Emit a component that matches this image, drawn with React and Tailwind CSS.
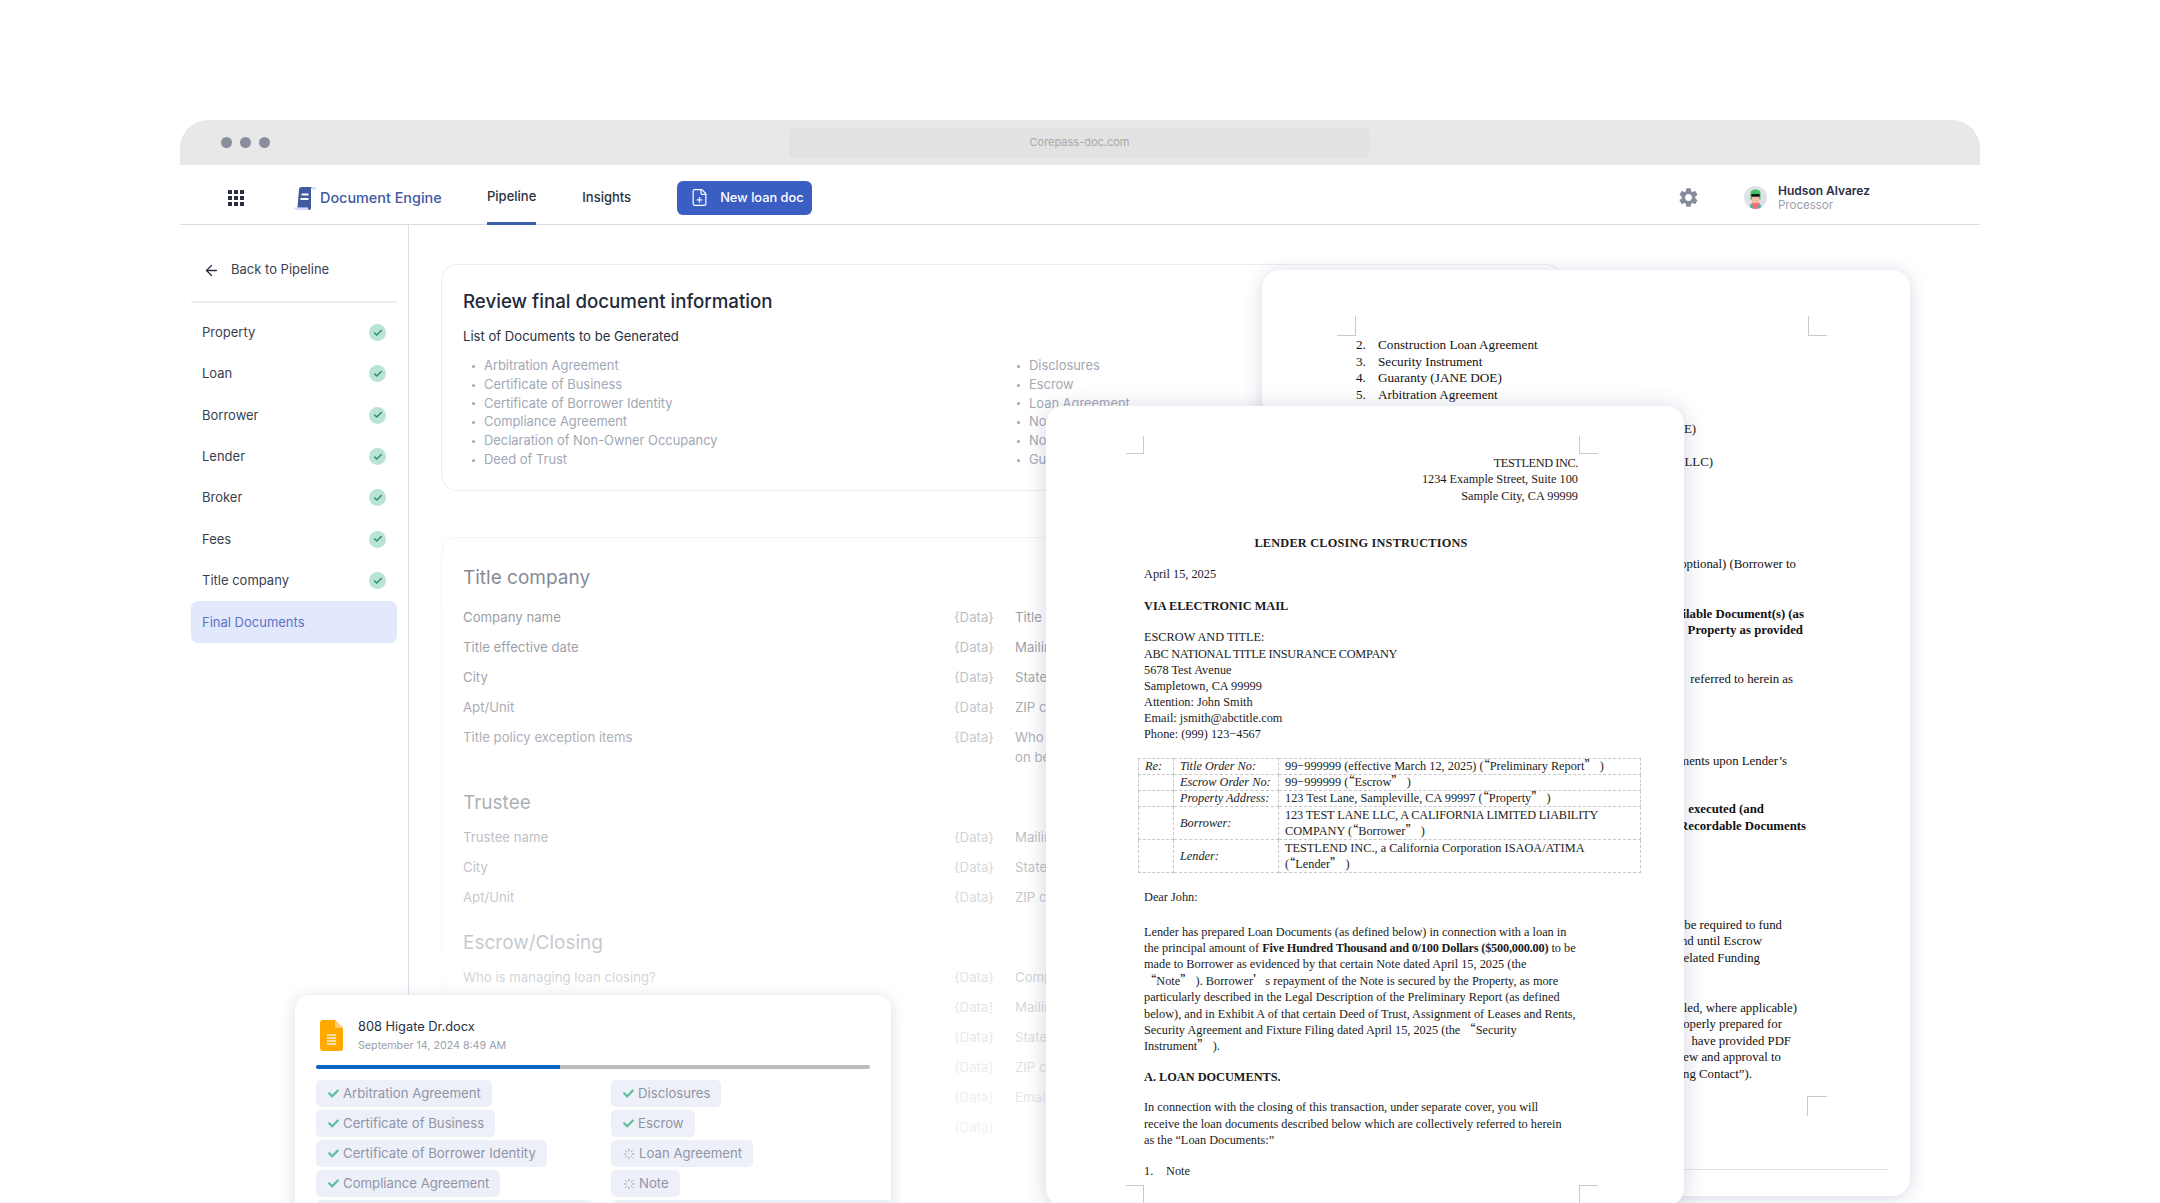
import { ArrowLeft, Check, FilePlus } from 'lucide-react';
import { FaCheck } from 'react-icons/fa';
import { MdSettings } from 'react-icons/md';

const STEPS = ['Property', 'Loan', 'Borrower', 'Lender', 'Broker', 'Fees', 'Title company'];
const DOCS_LEFT = ['Arbitration Agreement', 'Certificate of Business', 'Certificate of Borrower Identity', 'Compliance Agreement', 'Declaration of Non-Owner Occupancy', 'Deed of Trust'];
const DOCS_RIGHT = ['Disclosures', 'Escrow', 'Loan Agreement', 'Note', 'Notice of Right', 'Guaranty'];

const CHIPS = [
  ['Arbitration Agreement', true], ['Disclosures', true],
  ['Certificate of Business', true], ['Escrow', true],
  ['Certificate of Borrower Identity', true], ['Loan Agreement', false],
  ['Compliance Agreement', true], ['Note', false],
  ['Declaration of Non-Owner Occupancy', true], ['Guaranty and Notice of Right to Cancel', false],
];

function Logo() {
  return (
    <svg width="23" height="24" viewBox="0 0 23 24" className="shrink-0">
      <path d="M5 1h15c1.500 0 2.500 1 2.500 2.500H18V1z" fill="#d5def5" />
      <path d="M0 21.500h14V24H2.500C1 24 0 23 0 21.500z" fill="#d5def5" />
      <path d="M5 3.500C5 2 6 1 7.500 1H18c-.8.400-1 1.200-1 2.500V22c0 1.200-.6 2-1.600 2-.9 0-1.400-.8-1.400-2.500H3.500z" fill="#41599f" />
      <rect x="7.500" y="7.500" width="7" height="2" fill="#fff" />
      <rect x="6.500" y="12" width="8" height="2" fill="#fff" />
    </svg>
  );
}

function Avatar() {
  return (
    <svg width="23" height="23" viewBox="0 0 23 23" className="shrink-0">
      <circle cx="11.500" cy="11.500" r="11.500" fill="#dfe1e6" />
      <path d="M6 21c.5-4 2.500-5 5.500-5s5 1 5.500 5c-1.500 1.300-3.500 2-5.500 2S7.500 22.300 6 21z" fill="#e8757a" />
      <path d="M6 21c.3-1.500.8-2.600 1.800-3.400l1 5c-1-.3-2-.9-2.800-1.600zM17 21c-.3-1.500-.8-2.600-1.800-3.400l-1 5c1-.3 2-.9 2.800-1.600z" fill="#21c7b8" />
      <rect x="7.500" y="6" width="8" height="11" rx="3.500" fill="#edbfa4" />
      <path d="M6.500 14V7.500C6.500 5 8.500 3.500 11.500 3.500s5 1.500 5 4V14l-1.500-1V8H8v5z" fill="#3fc25f" />
      <rect x="7.200" y="8" width="8.600" height="2.800" rx="1" fill="#15171c" />
    </svg>
  );
}

function FileIcon() {
  return (
    <svg width="23" height="31" viewBox="0 0 23 31" className="shrink-0">
      <path d="M3 0h12l8 8v20a3 3 0 0 1-3 3H3a3 3 0 0 1-3-3V3a3 3 0 0 1 3-3z" fill="#ffa800" />
      <path d="M15 0l8 8h-6a2 2 0 0 1-2-2z" fill="#ffcf75" />
      <path d="M7 15h9M7 18h9M7 21h9M7 24h9" stroke="#fff4dd" strokeWidth="1.300" />
    </svg>
  );
}

function Spinner() {
  return (
    <svg width="12" height="12" viewBox="0 0 12 12" className="shrink-0" stroke="#9ea3b1" strokeWidth="1" strokeLinecap="round">
      <path d="M6 1v2M6 9v2M1 6h2M9 6h2M2.500 2.500l1.400 1.400M8.100 8.100l1.400 1.400M2.500 9.500l1.400-1.400M8.100 3.900l1.400-1.400" />
    </svg>
  );
}

function Q({ children }) {
  return <span className="font-['Noto_Sans_CJK_SC',serif] leading-[0]">{children}</span>;
}

function DataRow({ label, second }) {
  return (
    <div className="flex h-[30px] items-center text-[13.2px] text-[#3d4150]">
      <span className="w-[491px] whitespace-nowrap">{label}</span>
      <span className="w-[61px] text-[#787d8b]">{'{Data}'}</span>
      <span className="whitespace-nowrap">{second}</span>
    </div>
  );
}

function Heading({ children, className }) {
  return <h3 className={`h-[28px] text-[19px] leading-[28px] text-[#1f2a3c] ${className}`}>{children}</h3>;
}

function BackDocument() {
  return (
    <div className="absolute left-[1262px] top-[270px] h-[926px] w-[648px] rounded-[18px] bg-white font-['Liberation_Serif',serif] text-[12.8px] leading-[16.500px] text-[#111] shadow-[0_2px_18px_rgba(70,80,130,0.22)]">
      <div className="absolute left-[75px] top-[46px] h-[20px] w-[19px] border-b border-r border-[#c9cad0]" />
      <div className="absolute left-[546px] top-[46px] h-[20px] w-[19px] border-b border-l border-[#c9cad0]" />
      <div className="absolute left-[545px] top-[826px] h-[20px] w-[20px] border-l border-t border-[#c9cad0]" />
      <ol className="pl-[94px] pt-[67px] text-[13.2px]">
        {['Construction Loan Agreement', 'Security Instrument', 'Guaranty (JANE DOE)', 'Arbitration Agreement'].map((d, i) => (
          <li key={d} className="flex"><span className="w-[22px]">{i + 2}.</span>{d}</li>
        ))}
      </ol>
      <div className="whitespace-nowrap text-right">
        <p className="mt-[17.500px] pr-[214px]">Guaranty (JOHN DOE)</p>
        <p className="mt-[16.500px] pr-[197px]">Guaranty (123 TEST LANE LLC)</p>
        <p className="mt-[85.500px] pr-[114px]">optional) (Borrower to</p>
        <p className="mt-[33.500px] pr-[106px] font-bold">Available Document(s) (as</p>
        <p className="pr-[107px] font-bold">Property as provided</p>
        <p className="mt-[32.500px] pr-[117px]">referred to herein as</p>
        <p className="mt-[65.500px] pr-[123px]">documents upon Lender’s</p>
        <p className="mt-[31.500px] pr-[146px] font-bold">executed (and</p>
        <p className="pr-[104px] font-bold">Recordable Documents</p>
        <p className="mt-[82.500px] pr-[128px]">be required to fund</p>
        <p className="pr-[148px]">and until Escrow</p>
        <p className="pr-[150px]">related Funding</p>
        <p className="mt-[33.500px] pr-[113px]">initialed, where applicable)</p>
        <p className="pr-[128px]">properly prepared for</p>
        <p className="pr-[119px]">have provided PDF</p>
        <p className="pr-[129px]">review and approval to</p>
        <p className="pr-[158px]">Closing Contact”).</p>
      </div>
      <div className="ml-[94px] mr-[22px] mt-[87px] border-t border-[#e2e3e8]" />
    </div>
  );
}

function FrontDocument() {
  return (
    <div className="absolute left-[1046px] top-[406px] h-[800px] w-[638px] rounded-[18px] bg-white font-['Liberation_Serif',serif] text-[12.3px] leading-[16.400px] text-[#1b1b1b] shadow-[0_2px_22px_rgba(70,80,130,0.24)]">
      <div className="absolute left-[80px] top-[30px] h-[18px] w-[18px] border-b border-r border-[#c9cad0]" />
      <div className="absolute left-[533px] top-[30px] h-[18px] w-[19px] border-b border-l border-[#c9cad0]" />
      <div className="absolute left-[80px] top-[779px] h-[18px] w-[18px] border-r border-t border-[#c9cad0]" />
      <div className="absolute left-[533px] top-[779px] h-[18px] w-[19px] border-l border-t border-[#c9cad0]" />
      <div className="ml-[98px] w-[434px] whitespace-nowrap pt-[49px]">
        <p className="text-right"><span className="tracking-[-0.4px]">TESTLEND INC.</span><br />1234 Example Street, Suite 100<br />Sample City, CA 99999</p>
        <p className="mt-[31px] text-center font-bold tracking-[0.2px]">LENDER CLOSING INSTRUCTIONS</p>
        <p className="mt-[14px]">April 15, 2025</p>
        <p className="mt-[16px] font-bold">VIA ELECTRONIC MAIL</p>
        <p className="mt-[15px] leading-[16.100px]">
          ESCROW AND TITLE:<br /><span className="tracking-[-0.3px]">ABC NATIONAL TITLE INSURANCE COMPANY</span><br />5678 Test Avenue<br />Sampletown, CA 99999<br />
          Attention: John Smith<br />Email: jsmith@abctitle.com<br />Phone: (999) 123−4567
        </p>
        <table className="-ml-[6px] mt-[16px] w-[503px] table-fixed border-collapse leading-[15px] [&_td]:border [&_td]:border-dashed [&_td]:border-[#c8c8c8] [&_td]:py-0 [&_td]:align-middle">
          <colgroup>
            <col className="w-[35px]" />
            <col className="w-[105px]" />
            <col />
          </colgroup>
          <tbody>
            <tr className="h-[16px]">
              <td className="pl-[6px] italic">Re:</td>
              <td className="pl-[6px] italic">Title Order No:</td>
              <td className="pl-[6px]">99−999999 (effective March 12, 2025) (<Q>“</Q>Preliminary Report<Q>”</Q> )</td>
            </tr>
            <tr className="h-[16px]">
              <td />
              <td className="pl-[6px] italic">Escrow Order No:</td>
              <td className="pl-[6px]">99−999999 (<Q>“</Q>Escrow<Q>”</Q> )</td>
            </tr>
            <tr className="h-[16px]">
              <td />
              <td className="pl-[6px] italic">Property Address:</td>
              <td className="pl-[6px]">123 Test Lane, Sampleville, CA 99997 (<Q>“</Q>Property<Q>”</Q> )</td>
            </tr>
            <tr className="h-[33px] leading-[16px]">
              <td />
              <td className="pl-[6px] italic">Borrower:</td>
              <td className="pl-[6px]"><span className="tracking-[-0.15px]">123 TEST LANE LLC, A CALIFORNIA LIMITED LIABILITY</span><br />COMPANY (<Q>“</Q>Borrower<Q>”</Q> )</td>
            </tr>
            <tr className="h-[33px] leading-[16px]">
              <td />
              <td className="pl-[6px] italic">Lender:</td>
              <td className="pl-[6px]">TESTLEND INC., a California Corporation ISAOA/ATIMA<br />(<Q>“</Q>Lender<Q>”</Q> )</td>
            </tr>
          </tbody>
        </table>
        <p className="mt-[16px]">Dear John:</p>
        <p className="mt-[18px]">
          Lender has prepared Loan Documents (as defined below) in connection with a loan in<br />
          the principal amount of <b className="tracking-[-0.2px]">Five Hundred Thousand and 0/100 Dollars ($500,000.00)</b> to be<br />
          made to Borrower as evidenced by that certain Note dated April 15, 2025 (the<br />
          <Q>“</Q>Note<Q>”</Q> ). Borrower<Q>’</Q>s repayment of the Note is secured by the Property, as more<br />
          particularly described in the Legal Description of the Preliminary Report (as defined<br />
          below), and in Exhibit A of that certain Deed of Trust, Assignment of Leases and Rents,<br />
          Security Agreement and Fixture Filing dated April 15, 2025 (the <Q>“</Q>Security<br />
          Instrument<Q>”</Q> ).
        </p>
        <p className="mt-[14px] font-bold">A. LOAN DOCUMENTS.</p>
        <p className="mt-[14px]">
          In connection with the closing of this transaction, under separate cover, you will<br />
          receive the loan documents described below which are collectively referred to herein<br />
          as the “Loan Documents:”
        </p>
        <p className="mt-[15px] flex"><span className="w-[22px]">1.</span>Note</p>
      </div>
    </div>
  );
}

function UploadCard() {
  return (
    <div className="absolute left-[295px] top-[995px] h-[300px] w-[596px] rounded-[14px] bg-white pl-[21px] pt-[25px] shadow-[0_2px_16px_rgba(70,80,130,0.2)]">
      <div className="flex h-[31px] items-start pl-[4px]">
        <FileIcon />
        <div className="-mt-[3px] ml-[15px] whitespace-nowrap">
          <p className="text-[12.8px] leading-[19px] text-[#2a3040]">808 Higate Dr.docx</p>
          <p className="text-[10.7px] leading-[19px] text-[#9a9fad]">September 14, 2024 8:49 AM</p>
        </div>
      </div>
      <div className="mt-[14px] h-[4px] w-[554px] rounded-full bg-[#bdbdbd]">
        <div className="h-full w-[244px] rounded-l-full bg-[#0a66c2]" />
      </div>
      <div className="mt-[11px] grid grid-cols-[295px_1fr] gap-y-[3px]">
        {CHIPS.map(([name, done]) => (
          <div key={name} className="flex h-[27px] w-fit items-center gap-[4px] rounded-[5px] bg-[#eef0f9] pl-[12px] pr-[11px] text-[13.2px] text-[#8f95a5]">
            {done ? <FaCheck size={11} className="shrink-0 text-[#5bbf9f]" /> : <Spinner />}
            <span className="whitespace-nowrap">{name}</span>
          </div>
        ))}
      </div>
    </div>
  );
}

export default function App() {
  return (
    <div className="relative h-[1203px] w-[2160px] overflow-hidden bg-white pl-[180px] pr-[180px] pt-[120px] font-['Inter',sans-serif]">
      <div className="relative flex h-[45px] items-center rounded-t-[28px] bg-[#e8e8e8] pl-[41px]">
        <div className="flex gap-[8px]">
          <span className="h-[11px] w-[11px] rounded-full bg-[#8a8f9e]" />
          <span className="h-[11px] w-[11px] rounded-full bg-[#8a8f9e]" />
          <span className="h-[11px] w-[11px] rounded-full bg-[#8a8f9e]" />
        </div>
        <div className="ml-[519px] flex h-[30px] w-[581px] items-center justify-center rounded-[6px] bg-[#e2e2e2] text-[11px] text-[#a9a9a9]">
          Corepass-doc.com
        </div>
      </div>

      <header className="flex h-[60px] items-center border-b border-[#dcdce4] pl-[48px] pr-[112px] pt-[6px]">
        <svg width="16" height="16" viewBox="0 0 16 16" className="shrink-0" fill="#2b3040">
          <rect x="0" y="0" width="4" height="4" /><rect x="6" y="0" width="4" height="4" /><rect x="12" y="0" width="4" height="4" />
          <rect x="0" y="6" width="4" height="4" /><rect x="6" y="6" width="4" height="4" /><rect x="12" y="6" width="4" height="4" />
          <rect x="0" y="12" width="4" height="4" /><rect x="6" y="12" width="4" height="4" /><rect x="12" y="12" width="4" height="4" />
        </svg>
        <div className="ml-[50px]"><Logo /></div>
        <span className="ml-[3px] w-[121px] whitespace-nowrap text-[14.4px] font-medium text-[#41599f]">Document Engine</span>
        <a className="-mb-px ml-[46px] flex items-center self-stretch border-b-[3px] border-[#3f5fb5] text-[13px] font-medium text-[#2a3040]">Pipeline</a>
        <a className="ml-[46px] text-[13px] font-medium text-[#2a3040]">Insights</a>
        <button className="ml-[46px] flex h-[34px] w-[135px] items-center gap-[11px] rounded-[6px] bg-[#3a5ec2] pl-[13px] text-[12.8px] font-medium text-white">
          <FilePlus size={19} strokeWidth={1.5} className="shrink-0" />
          New loan doc
        </button>
        <div className="ml-auto flex items-center">
          <MdSettings size={23} className="text-[#878c9c]" />
          <div className="ml-[44px]"><Avatar /></div>
          <div className="ml-[11px] w-[90px] whitespace-nowrap">
            <p className="text-[12px] font-semibold leading-[14px] text-[#2a2f45]">Hudson Alvarez</p>
            <p className="text-[11.5px] leading-[14px] text-[#9a9fb0]">Processor</p>
          </div>
        </div>
      </header>

      <div className="flex h-[978px]">
        <aside className="w-[229px] shrink-0 border-r border-[#dcdfe8] px-[11px] pt-[31px] text-[13px] text-[#3a3f50]">
          <div className="flex h-[28px] items-center pl-[12px]">
            <ArrowLeft size={17} strokeWidth={1.8} className="text-[#2a3040]" />
            <span className="ml-[11px]">Back to Pipeline</span>
          </div>
          <div className="mb-[9px] mt-[17px] h-[2px] bg-[#eceef3]" />
          {STEPS.map((s) => (
            <div key={s} className="flex h-[41.330px] items-center justify-between pl-[11px] pr-[11px]">
              {s}
              <span className="flex h-[17px] w-[17px] items-center justify-center rounded-full bg-[#b9e3d7]">
                <Check size={10} strokeWidth={3.5} className="text-[#2e8b6d]" />
              </span>
            </div>
          ))}
          <div className="flex h-[42px] items-center rounded-[7px] bg-[#e3e9fd] pl-[11px] text-[#5a72c4]">Final Documents</div>
        </aside>

        <main className="relative flex-1 pl-[32px] pt-[39px]">
          <section className="h-[227px] w-[1121px] rounded-[16px] border border-[#ecedf4] pl-[21px] pt-[23px]">
            <h2 className="text-[18.700px] font-medium leading-[28px] text-[#1f2a3c]">Review final document information</h2>
            <p className="mt-[10px] text-[13.1px] leading-[20px] text-[#2a3040]">List of Documents to be Generated</p>
            <div className="mt-[11px] flex text-[12.9px] leading-[18.800px] text-[#a2a7b5]">
              <ul className="w-[545px]">
                {DOCS_LEFT.map((d) => <li key={d} className="flex items-center pl-[9px]"><span className="mr-[9px] h-[3px] w-[3px] rounded-full bg-[#a2a7b5]" />{d}</li>)}
              </ul>
              <ul>
                {DOCS_RIGHT.map((d) => <li key={d} className="flex items-center pl-[9px]"><span className="mr-[9px] h-[3px] w-[3px] rounded-full bg-[#a2a7b5]" />{d}</li>)}
              </ul>
            </div>
          </section>

          <section className="mt-[46px] h-[800px] w-[1121px] rounded-[16px] border border-[#ecedf4] pl-[21px] pt-[26px]">
            <Heading>Title company</Heading>
            <div className="mt-[11px]">
              <DataRow label="Company name" second="Title company phone" />
              <DataRow label="Title effective date" second="Mailing address" />
              <DataRow label="City" second="State" />
              <DataRow label="Apt/Unit" second="ZIP code" />
              <div className="flex h-[50px] pt-[4px] text-[13.2px] leading-[20px] text-[#3d4150]">
                <span className="w-[491px]">Title policy exception items</span>
                <span className="w-[61px] text-[#787d8b]">{'{Data}'}</span>
                <span>Who is managing<br />on behalf</span>
              </div>
            </div>
            <Heading className="mt-[16px]">Trustee</Heading>
            <div className="mt-[6px]">
              <DataRow label="Trustee name" second="Mailing address" />
              <DataRow label="City" second="State" />
              <DataRow label="Apt/Unit" second="ZIP code" />
            </div>
            <Heading className="mt-[16px]">Escrow/Closing</Heading>
            <div className="mt-[6px]">
              <DataRow label="Who is managing loan closing?" second="Company name" />
              <DataRow label="Escrow officer" second="Mailing address" />
              <DataRow label="City" second="State" />
              <DataRow label="Apt/Unit" second="ZIP code" />
              <DataRow label="Phone" second="Email" />
              <DataRow label="Fax" second="" />
            </div>
          </section>
          <div className="absolute inset-x-0 bottom-0 top-[298px] bg-gradient-to-b from-white/40 to-white/95" />
        </main>
      </div>

      <BackDocument />
      <FrontDocument />
      <UploadCard />
    </div>
  );
}
